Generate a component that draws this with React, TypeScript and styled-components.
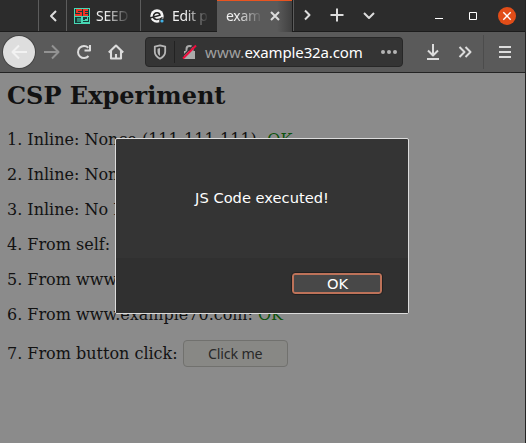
import React from "react";
import styled, { createGlobalStyle } from "styled-components";

const Global = createGlobalStyle`
  * { box-sizing: border-box; }
  body { margin: 0; background: #8b8b8b; overflow: hidden; }
`;

const Window = styled.div`
  position: relative;
  width: 526px;
  height: 443px;
  display: flex;
  flex-direction: column;
  overflow: hidden;
  background: #8b8b8b;
  border-right: 1px solid #242424;
  font-family: "Noto Sans", sans-serif;
`;

const TabBar = styled.div`
  display: flex;
  height: 32px;
  background: #2c2c2c;
  border-bottom: 1px solid #1c1c1c;
`;

const BarCell = styled.div<{ $w: number; $line?: boolean }>`
  display: flex;
  align-items: center;
  justify-content: center;
  flex: none;
  width: ${(p) => p.$w}px;
  height: 31px;
  border-right: ${(p) => (p.$line ? "1px solid #5c5c5c" : "none")};
`;

const Tab = styled.div<{ $w: number; $active?: boolean; $line?: boolean }>`
  display: flex;
  align-items: center;
  flex: none;
  width: ${(p) => p.$w}px;
  height: ${(p) => (p.$active ? 32 : 31)}px;
  padding-left: ${(p) => (p.$active ? 9 : 7)}px;
  background: ${(p) => (p.$active ? "linear-gradient(90deg, #5a5a5a 80%, #404040)" : "transparent")};
  box-shadow: ${(p) => (p.$active ? "inset 0 1px #e95420" : "none")};
  border-right: ${(p) => (p.$line ? "1px solid #5c5c5c" : "none")};
`;

const TabTitle = styled.span<{ $w: number; $fade: number; $space: number }>`
  flex: none;
  width: ${(p) => p.$w}px;
  white-space: nowrap;
  font-size: 14px;
  line-height: 20px;
  letter-spacing: ${(p) => p.$space}px;
  color: #f0f0f0;
  mask-image: linear-gradient(90deg, #000 ${(p) => p.$fade}%, transparent);
`;

const Favicon = styled.svg`
  flex: none;
  margin-right: 6px;
`;

const Toolbar = styled.div`
  display: flex;
  align-items: center;
  height: 41px;
  background: #5a5a5a;
  border-bottom: 1px solid #242424;
  padding-left: 3px;
`;

const BackButton = styled.div`
  width: 32px;
  height: 32px;
  display: flex;
  align-items: center;
  justify-content: center;
  border-radius: 50%;
  background: #dedede;
  box-shadow: 0 0 0 1px #444;
`;

const AddressBar = styled.div`
  display: flex;
  align-items: center;
  flex: none;
  width: 258px;
  height: 30px;
  margin-right: 1px;
  background: #343434;
  border: 1px solid #272727;
  border-radius: 4px;
  padding-left: 7px;
`;

const Divider = styled.div<{ $h: number; $c: string }>`
  flex: none;
  width: 1px;
  height: ${(p) => p.$h}px;
  background: ${(p) => p.$c};
`;

const Url = styled.span`
  flex: none;
  width: 174px;
  white-space: nowrap;
  font-size: 15px;
  line-height: 22px;
  color: #a0a0a0;
  letter-spacing: 0.15px;
  b { font-weight: 400; color: #fff; letter-spacing: -0.12px; }
`;

const Page = styled.main`
  padding: 0 7px;
  font-family: "DejaVu Serif", serif;
  color: #121212;
`;

const Heading = styled.h1`
  margin: 9px 0 20px;
  font-size: 24px;
  line-height: 28px;
  font-weight: 700;
  white-space: nowrap;
`;

const Line = styled.p`
  display: flex;
  align-items: center;
  margin: 0 0 16px;
  height: 19px;
  font-size: 16px;
  line-height: 19px;
  white-space: pre;
`;

const Ok = styled.span`
  color: #0c520c;
`;

const ClickButton = styled.button`
  width: 105px;
  height: 27px;
  padding: 0;
  border: 1px solid #71716e;
  border-radius: 4px;
  background: #888885;
  color: #292929;
  font: 14.3px/20px "Noto Sans", sans-serif;
  letter-spacing: -0.2px;
`;

const LastLine = styled(Line)`
  height: 27px;
`;

const Dialog = styled.div`
  position: absolute;
  left: 115px;
  top: 138px;
  width: 294px;
  height: 176px;
  display: flex;
  flex-direction: column;
  border: 1px solid #dcdcdc;
  border-radius: 2px;
  background: #343434;
  font-family: "DejaVu Sans", sans-serif;
  font-size: 14.67px;
  color: #fff;
`;

const Message = styled.div`
  flex: 1;
  display: flex;
  align-items: center;
  justify-content: center;
  padding-bottom: 2px;
`;

const Footer = styled.div`
  display: flex;
  justify-content: flex-end;
  height: 55px;
  padding: 14px 25px 0 0;
  background: #303030;
`;

const OkButton = styled.button`
  width: 92px;
  height: 23px;
  padding: 0 0 0 1px;
  border: 1px solid #202020;
  border-radius: 4px;
  background: #484848;
  box-shadow: inset 0 0 0 2px #bd7259;
  color: #fff;
  font: 14.67px/19px "DejaVu Sans", sans-serif;
`;

const Glyph = styled.svg<{ $ml: number }>`
  flex: none;
  display: block;
  margin-left: ${(p) => p.$ml}px;
`;

const Icon = ({ w, h = w, d, sw = 2, c = "#dcdcdc", ml = 0 }: {
  w: number; h?: number; d: string; sw?: number; c?: string; ml?: number;
}) => (
  <Glyph $ml={ml} width={w} height={h} viewBox={`0 0 ${w} ${h}`} fill="none" stroke={c} strokeWidth={sw}>
    <path d={d} strokeLinejoin="round" />
  </Glyph>
);

const lines: [string, boolean][] = [
  ["1. Inline: Nonce (111-111-111): ", true],
  ["2. Inline: Nonce", false],
  ["3. Inline: No N", false],
  ["4. From self:", false],
  ["5. From www.", false],
  ["6. From www.example70.com: ", true],
];

export default function App() {
  return (
    <Window>
      <Global />
      <TabBar>
        <BarCell $w={39} $line />
        <BarCell $w={28} $line>
          <Icon w={8} h={12} d="M7 1L2 6L7 11" />
        </BarCell>
        <Tab $w={74} $line>
          <Favicon width="16" height="16" viewBox="0 0 16 16">
            <path fill="#48d8b4" d="M0 0h16v16H0z" />
            <path fill="#173c38" d="M1 1h14v7H1zM1 9h14v6H1z" />
            <path fill="#f03424" d="M2 1h6v2H4v1h4v4H1V6h5V5H2zM9 1h5v2h-3v1h3v1h-3v1h3v2H9z" />
            <path fill="#48d8b4" d="M3 10.500h4v1H3zM3 12.500h4v1H3zM7 9h2v6H7zM11 11h2v2h-4v-1h2zM13 9h1v4h-1zM9 14h6v1H9z" />
          </Favicon>
          <TabTitle $w={35} $fade={25} $space={-0.3}>SEED</TabTitle>
        </Tab>
        <Tab $w={76}>
          <Favicon width="18" height="16" viewBox="0 0 18 16">
            <circle cx="9" cy="8" r="6.700" fill="#f4f4f4" />
            <path d="M2 10L12 7.200C11.500 3.600 6 3.800 5.500 8C5.200 12 10 12.600 14.500 9.500" fill="none" stroke="#252525" strokeWidth="1.500" />
            <circle cx="13.700" cy="13" r="2.500" fill="#2c2c2c" />
            <circle cx="14" cy="13" r="1.600" fill="#42b2e7" />
          </Favicon>
          <TabTitle $w={37} $fade={35} $space={-0.3}>Edit p</TabTitle>
        </Tab>
        <Tab $w={75} $active>
          <TabTitle $w={37} $fade={30} $space={-0.3}>exam</TabTitle>
          <Icon w={10} d="M1 1L9 9M9 1L1 9" ml={7} />
        </Tab>
        <Divider $h={31} $c="#1c1c1c" />
        <Divider $h={31} $c="#5c5c5c" />
        <Icon w={8} h={31} d="M2 10.5L6.5 15L2 19.5" ml={9} />
        <Icon w={14} h={31} d="M7 8.5V21.5M.5 15H13.5" ml={19} />
        <Icon w={12} h={31} d="M1 13L6 18L11 13" ml={19} />
        <Icon w={8} h={31} d="M0 18.5H8" sw={1} c="#fff" ml={60} />
        <Icon w={8} h={31} d="M.5 12.5H7.5V19.5H.5Z" sw={1} c="#fff" ml={26} />
        <Glyph $ml={21} width="18" height="31" viewBox="0 0 18 31">
          <circle cx="9" cy="16" r="9" fill="#e24d18" />
          <path d="M5.3 12.3L12.7 19.7M12.7 12.3L5.3 19.7" stroke="#fff" strokeWidth="1.4" />
        </Glyph>
      </TabBar>

      <Toolbar>
        <BackButton><Icon w={16} d="M16 8H2M8 1.5L1.5 8L8 14.5" c="#f2f2f2" /></BackButton>
        <Icon w={16} d="M0 8H14M8 1.5L14.5 8L8 14.5" c="#929292" ml={9} />
        <Icon w={16} d="M12.300 3.800A6 6 0 1 0 12.500 12M14 1V6.5H8.5" ml={16} />
        <Icon w={16} d="M.8 8.5L8 1.5L15.2 8.5M3 7V14.5H13V7M8 14V10" sw={2.1} ml={16} />
        <Glyph $ml={21} width="0" height="1" />
        <AddressBar>
          <Icon w={14} h={16} d="M7 1.3L12.2 2.6V7.5C12.2 11 10.2 13.1 7 14.7C3.8 13.1 1.8 11 1.8 7.5V2.6Z" sw={1.8} c="#b6b6b6" />
          <Glyph $ml={-14} width="14" height="16"><path d="M7 4V12C5 10.700 4.500 9.500 4.500 7.500V4.700Z" fill="#b6b6b6" /></Glyph>
          <Glyph $ml={7} width="1" height="22"><path d="M.5 0V22" stroke="#222" /></Glyph>
          <Glyph $ml={7} width="15" height="16" viewBox="0 0 15 16">
            <path d="M2 7h11v8H2z" fill="#ababab" />
            <path d="M4.500 8V5a3 3 0 0 1 6 0V8" fill="none" stroke="#ababab" strokeWidth="2" />
            <path d="M0 13L12.500 .5" stroke="#353535" strokeWidth="1.500" />
            <path d="M1 14.5L14 1.5" stroke="#f20b3d" strokeWidth="2" />
          </Glyph>
          <Glyph $ml={7} width="1" height="1" />
          <Url>www.<b>example32a.com</b></Url>
          <Glyph $ml={1} width="18" height="4"><g fill="#b4b4b4"><circle cx="3" cy="2" r="2" /><circle cx="9" cy="2" r="2" /><circle cx="15" cy="2" r="2" /></g></Glyph>
        </AddressBar>
        <Icon w={14} h={16} d="M7 0V11M2 6.5L7 11.5L12 6.5M1 15H13" ml={22} />
        <Icon w={14} h={14} d="M1.5 2L6.5 7L1.5 12M7.5 2L12.5 7L7.5 12" ml={18} />
        <Glyph $ml={11} width="1" height="34"><path d="M.5 0V34" stroke="#4c4c4c" /></Glyph>
        <Icon w={12} h={14} d="M0 2H12M0 7H12M0 12H12" ml={15} />
      </Toolbar>

      <Page>
        <Heading>CSP Experiment</Heading>
        {lines.map(([text, ok]) => (
          <Line key={text}>{text}{ok && <Ok>OK</Ok>}</Line>
        ))}
        <LastLine as="div"><span>7. From button click: </span><ClickButton>Click me</ClickButton></LastLine>
      </Page>

      <Dialog>
        <Message>JS Code executed!</Message>
        <Footer><OkButton>OK</OkButton></Footer>
      </Dialog>
    </Window>
  );
}
